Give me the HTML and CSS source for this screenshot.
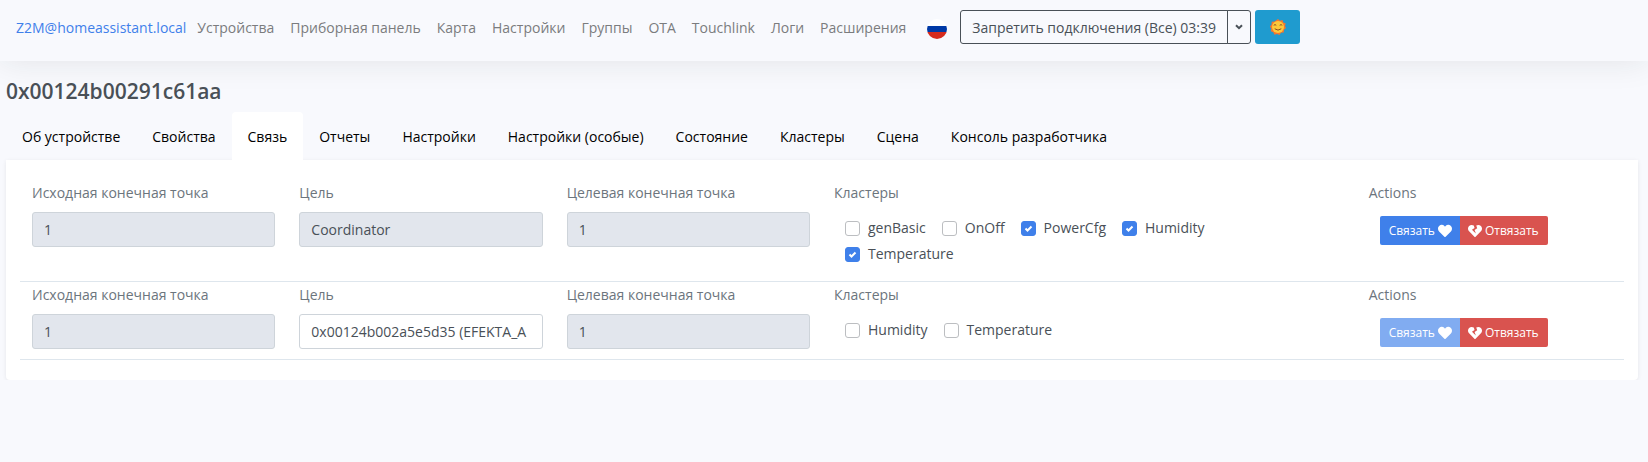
FILE: index.html
```html
<!DOCTYPE html>
<html lang="ru">
<head>
<meta charset="utf-8">
<meta name="viewport" content="width=device-width, initial-scale=1">
<title>Zigbee2MQTT</title>
<link rel="stylesheet" href="styles.css">
</head>
<body>
<svg class="sprite" aria-hidden="true">
  <symbol id="heart" viewBox="0 0 512 512"><path fill="currentColor" d="M462.3 62.6C407.5 15.900 326 24.300 275.700 76.200L256 96.500l-19.700-20.300C186.100 24.300 104.500 15.900 49.700 62.600c-62.800 53.600-66.100 149.800-9.900 207.900l193.500 199.800c12.500 12.900 32.800 12.900 45.300 0l193.500-199.800c56.300-58.100 53-154.300-9.800-207.900z"/></symbol>
  <symbol id="heart-broken" viewBox="0 0 512 512"><path fill="currentColor" d="M473.700 73.800l-2.400-2.500c-46-47-118-51.700-169.600-14.800L336 159.900l-96 64 48 128-144-144 96-64-28.600-86.500C159.700 19.600 87 24 40.700 71.400l-2.400 2.400C-10.400 123.600-12.500 202.900 31 256l212.100 218.600c7.100 7.300 18.600 7.300 25.700 0L481 255.900c43.500-53 41.400-132.300-7.300-182.100z"/></symbol>
</svg>

<nav class="navbar">
  <a class="brand" href="#">Z2M@homeassistant.local</a>
  <a class="nav-link" href="#">Устройства</a>
  <a class="nav-link" href="#">Приборная панель</a>
  <a class="nav-link" href="#">Карта</a>
  <a class="nav-link" href="#">Настройки</a>
  <a class="nav-link" href="#">Группы</a>
  <a class="nav-link" href="#">OTA</a>
  <a class="nav-link" href="#">Touchlink</a>
  <a class="nav-link" href="#">Логи</a>
  <a class="nav-link" href="#">Расширения</a>
  <button class="flag" type="button" aria-label="Русский"></button>
  <div class="join-group">
    <button class="join-main" type="button">Запретить подключения (Все) 03:39</button>
    <button class="join-toggle" type="button" aria-label="Выбрать устройство">
      <svg class="caret" viewBox="0 0 8 6"><path d="M1 1.200l3 3 3-3" fill="none" stroke="currentColor" stroke-width="2"/></svg>
    </button>
  </div>
  <button class="theme" type="button" aria-label="Тема">
    <svg class="sun" viewBox="0 0 32 32">
      <path fill="#f4772f" d="M16 0l4 3.500 5-1.500 1.500 5 5 2-1.500 5 2 4-4 3.500-.5 5.500-5.500.5-3 4.500-5-2-5 1.500-2.500-5-5-2 1-5L0 15l3-4 .5-5.500 5.500-.5z"/>
      <circle cx="16" cy="16" r="12" fill="#fdc93a"/>
      <path d="M8 12q2-2 4 0M20 12q2-2 4 0M10 20q6 5 12 0" fill="none" stroke="#8b4d20" stroke-width="2" stroke-linecap="round"/>
    </svg>
  </button>
</nav>

<main class="page">
  <h1 class="title">0x00124b00291c61aa</h1>
  <nav class="tabs">
    <a class="tab" href="#">Об устройстве</a>
    <a class="tab" href="#">Свойства</a>
    <a class="tab active" href="#">Связь</a>
    <a class="tab" href="#">Отчеты</a>
    <a class="tab" href="#">Настройки</a>
    <a class="tab" href="#">Настройки (особые)</a>
    <a class="tab" href="#">Состояние</a>
    <a class="tab" href="#">Кластеры</a>
    <a class="tab" href="#">Сцена</a>
    <a class="tab" href="#">Консоль разработчика</a>
  </nav>

  <section class="card">
    <div class="bind-row">
      <div class="col">
        <label class="label" for="src1">Исходная конечная точка</label>
        <select class="field" id="src1" disabled><option>1</option></select>
      </div>
      <div class="col">
        <label class="label" for="dst1">Цель</label>
        <select class="field" id="dst1" disabled><option>Coordinator</option></select>
      </div>
      <div class="col">
        <label class="label" for="ep1">Целевая конечная точка</label>
        <select class="field" id="ep1" disabled><option>1</option></select>
      </div>
      <div class="col">
        <span class="label">Кластеры</span>
        <div class="checks">
          <label class="check"><input class="box" type="checkbox">genBasic</label>
          <label class="check"><input class="box" type="checkbox">OnOff</label>
          <label class="check"><input class="box" type="checkbox" checked>PowerCfg</label>
          <label class="check"><input class="box" type="checkbox" checked>Humidity</label>
          <label class="check"><input class="box" type="checkbox" checked>Temperature</label>
        </div>
      </div>
      <div class="col">
        <span class="label">Actions</span>
        <div class="actions">
          <button class="btn bind" type="button">Связать <svg class="icon"><use href="#heart"/></svg></button>
          <button class="btn unbind" type="button"><svg class="icon"><use href="#heart-broken"/></svg> Отвязать</button>
        </div>
      </div>
    </div>

    <div class="bind-row">
      <div class="col">
        <label class="label" for="src2">Исходная конечная точка</label>
        <select class="field" id="src2" disabled><option>1</option></select>
      </div>
      <div class="col">
        <label class="label" for="dst2">Цель</label>
        <select class="field" id="dst2"><option>0x00124b002a5e5d35 (EFEKTA_A</option></select>
      </div>
      <div class="col">
        <label class="label" for="ep2">Целевая конечная точка</label>
        <select class="field" id="ep2" disabled><option>1</option></select>
      </div>
      <div class="col">
        <span class="label">Кластеры</span>
        <div class="checks">
          <label class="check"><input class="box" type="checkbox">Humidity</label>
          <label class="check"><input class="box" type="checkbox">Temperature</label>
        </div>
      </div>
      <div class="col">
        <span class="label">Actions</span>
        <div class="actions">
          <button class="btn bind" type="button" disabled>Связать <svg class="icon"><use href="#heart"/></svg></button>
          <button class="btn unbind" type="button"><svg class="icon"><use href="#heart-broken"/></svg> Отвязать</button>
        </div>
      </div>
    </div>
  </section>
</main>
</body>
</html>
```
FILE: styles.css
```css
* { box-sizing: border-box; }

body {
  margin: 0;
  background: #f8f9fd;
  color: #495057;
  font: 14px/22px "Open Sans", "Noto Sans", sans-serif;
}

a { text-decoration: none; }
button, select, input { font: inherit; margin: 0; }
.sprite { display: none; }

.navbar {
  display: flex;
  align-items: center;
  padding: 10px 16px 17px;
  box-shadow: 0 0 32px rgba(33, 37, 41, 0.1);
  white-space: nowrap;
}
.brand { margin-right: 3px; padding: 7px 0 5px; color: #3f80ea; }
.nav-link { padding: 7px 8px 5px; color: #7b7c7e; }
.flag {
  width: 20px;
  height: 20px;
  margin: 4px 13px 0 13px;
  padding: 0;
  border: 0;
  border-radius: 50%;
  background: linear-gradient(#fff 35%, #0039a6 35% 65%, #d52b1e 65%);
}
.join-group { display: flex; height: 34px; }
.join-main, .join-toggle {
  border: 1px solid #495057;
  background: transparent;
  color: #495057;
}
.join-main { padding: 1px 11px 0; border-radius: 3px 0 0 3px; }
.join-toggle {
  display: flex;
  align-items: center;
  justify-content: center;
  width: 24px;
  margin-left: -1px;
  padding: 0;
  border-radius: 0 3px 3px 0;
}
.caret { width: 8px; height: 6px; }
.theme {
  display: flex;
  align-items: center;
  justify-content: center;
  width: 45px;
  height: 34px;
  margin-left: 4px;
  padding: 0;
  border: 0;
  border-radius: 3px;
  background: #1f9bcf;
}
.sun { width: 16px; height: 16px; }

.page { padding: 17px 10px 0 6px; }
.title {
  margin: 0 0 7px;
  font-size: 21px;
  line-height: 27px;
  font-weight: 600;
}
.tabs { display: flex; white-space: nowrap; }
.tab { padding: 14px 16px 12px; color: #000; border-radius: 4px 4px 0 0; }
.tab.active { background: #fff; }

.card {
  padding: 20px 14px;
  background: #fff;
  border-radius: 0 0 4px 4px;
  box-shadow: 0 1px 4px rgba(0, 0, 0, 0.08);
}
.bind-row {
  display: grid;
  grid-template-columns: 2fr 2fr 2fr 4fr 2fr;
  padding: 2px 0 10px;
  border-bottom: 1px solid #dee6ed;
}
.col { min-width: 0; padding: 0 12px; }
.label { display: block; margin-bottom: 8px; color: #6c757d; }
.field {
  display: block;
  width: 100%;
  height: 35px;
  padding: 0 11px;
  appearance: none;
  border: 1px solid #ced4da;
  border-radius: 3px;
  background: #fff;
  color: #495057;
  opacity: 1;
}
.field:disabled { background: #e2e6ed; }

.checks {
  display: flex;
  flex-wrap: wrap;
  row-gap: 4px;
  max-width: 440px;
  padding: 5px 11px 6px;
}
.check { display: flex; align-items: center; margin-right: 16px; }
.box {
  width: 15px;
  height: 15px;
  margin-right: 8px;
  appearance: none;
  border: 1px solid #bcbec1;
  border-radius: 3px;
  background: #fff;
}
.box:checked {
  border-color: #3f80ea;
  background: #3f80ea url("data:image/svg+xml,%3Csvg xmlns='http://www.w3.org/2000/svg' viewBox='0 0 13 13'%3E%3Cpath d='M3.500 6.500l2 2 4-4' fill='none' stroke='white' stroke-width='2'/%3E%3C/svg%3E") center / 13px 13px;
}

.actions { display: flex; padding: 4px 11px 0; white-space: nowrap; }
.btn {
  display: flex;
  align-items: center;
  gap: 3px;
  height: 29px;
  padding: 0 8px;
  border: 0;
  color: #fff;
  font-size: 12px;
}
.bind { padding: 0 8px 0 9px; background: #3f80ea; border-radius: 2px 0 0 2px; }
.bind:disabled { opacity: 0.65; }
.unbind { padding-right: 9px; background: #d9534f; border-radius: 0 2px 2px 0; }
.icon { width: 14px; height: 14px; }
```
